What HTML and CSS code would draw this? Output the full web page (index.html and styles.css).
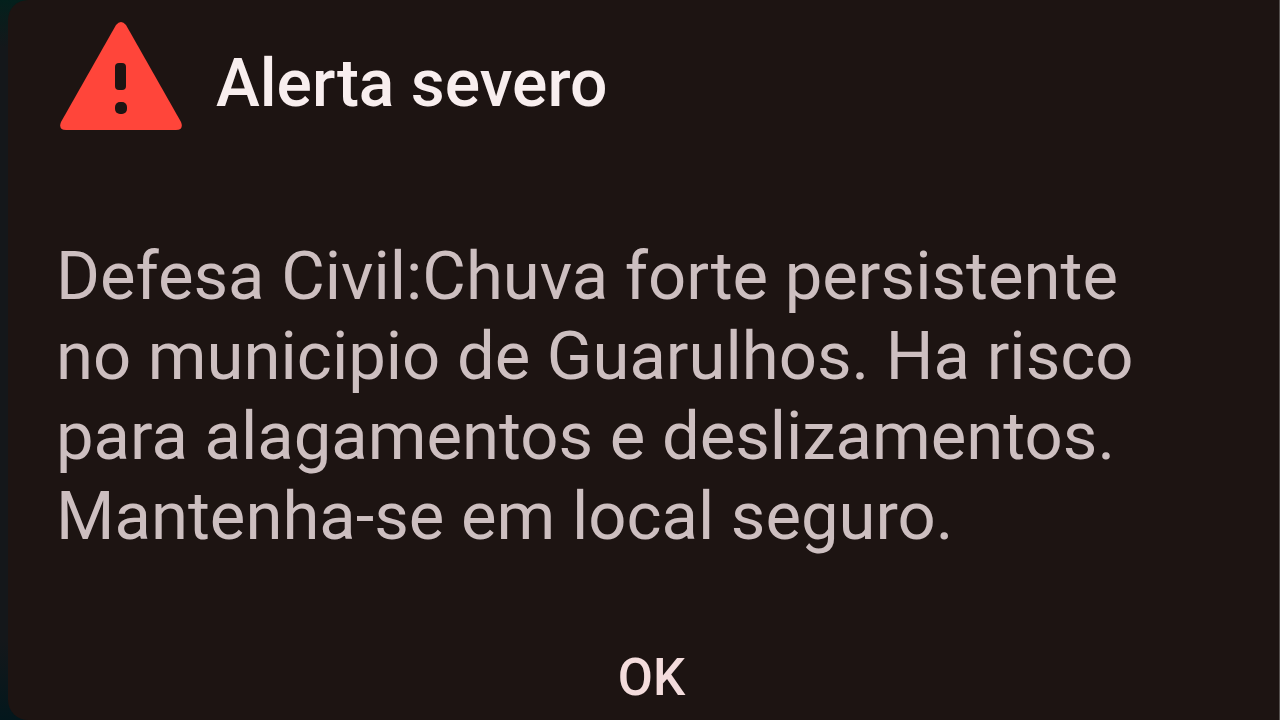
FILE: index.html
```
<!DOCTYPE html>
<html lang="pt-BR">

<head>
    <meta charset="UTF-8">
    <meta name="viewport" content="width=device-width, initial-scale=1.0">
    <title>Alerta severo</title>
    <link rel="stylesheet" href="styles.css">
</head>

<body>

    <div class="dialog" role="alertdialog" aria-labelledby="title" aria-describedby="message">
        <div class="header">
            <svg class="icon" viewBox="0 0 128 112" aria-hidden="true">
                <path class="triangle" d="M60 5 Q65 -1 70 5 L125 102 Q128 110 120 110 H10 Q2 110 5 102 Z" />
                <rect class="mark" x="59" y="43" width="11" height="27" rx="4" />
                <rect class="mark" x="59" y="82" width="12" height="12" rx="5" />
            </svg>
            <h1 class="title" id="title">Alerta severo</h1>
        </div>
        <p class="message" id="message">Defesa Civil:Chuva forte persistente no municipio de Guarulhos. Ha risco para alagamentos e deslizamentos. Mantenha-se em local seguro.</p>
        <div class="buttons">
            <button class="ok" type="button">OK</button>
        </div>
    </div>

</body>

</html>
```
FILE: styles.css
```
/* css reset START */
* {
    margin: 0;
    padding: 0;
    box-sizing: border-box;
}

/* css reset END */

body {
    background: linear-gradient(#03201c, #14171a 48px, #14171a 640px, #03171c);
    border-right: 1px solid #55504e;
    font-family: Roboto, sans-serif;
}

/* dialog START */
.dialog {
    min-height: 100vh;
    margin-left: 8px;
    padding: 20px 120px 4px 48px;
    display: flex;
    flex-direction: column;
    background-color: #1d1412;
    border-radius: 20px 0 0 20px;
}

/* dialog END */

/* header START */
.header {
    display: flex;
    align-items: center;
    gap: 32px;
}

.icon {
    width: 128px;
    height: 112px;
}

.triangle {
    fill: #ff453a;
}

.mark {
    fill: #1d1412;
}

.title {
    padding-top: 16px;
    color: #f8eeee;
    font-size: 66px;
    font-weight: 500;
    line-height: 80px;
}

/* header END */

/* message START */
.message {
    margin-top: 104px;
    color: #cdbfc0;
    font-size: 67px;
    line-height: 80px;
}

/* message END */

/* buttons START */
.buttons {
    margin-top: auto;
    padding-left: 88px;
    text-align: center;
}

.ok {
    padding: 8px 16px;
    border: none;
    background: none;
    color: #f3dcdc;
    font-family: inherit;
    font-size: 51px;
    font-weight: 500;
    line-height: 60px;
    cursor: pointer;
}

/* buttons END */
```
